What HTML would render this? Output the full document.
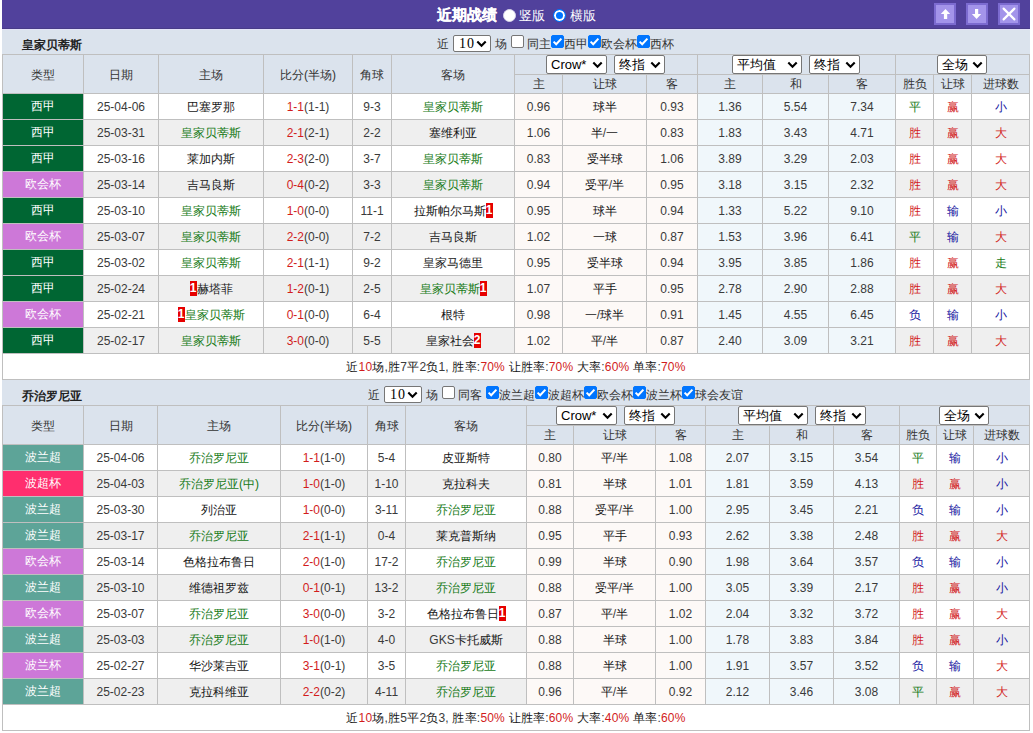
<!DOCTYPE html><html><head><meta charset="utf-8"><style>
html,body{margin:0;padding:0;background:#fff;}
body{width:1033px;height:733px;position:relative;overflow:hidden;font-family:"Liberation Sans",sans-serif;}
div{position:absolute;box-sizing:border-box;}
.t,.th,.td,.tl,.tt{white-space:nowrap;color:#333;font-size:12px;}
.th,.td,.tl{text-align:center;}
.c{}
.th{color:#333;}
.td{color:#3a3a3a;}
.td>.c{color:#161616;}
.tl{color:#fff;}
.tt{font-weight:bold;font-size:12px;color:#222;}
.ff{color:#333;}
.sel{background:#fff;border:1px solid #767676;border-radius:2px;overflow:hidden;}
.sel .sl{position:absolute;left:0;top:0;font-size:13px;color:#000;white-space:nowrap;}
.sel .chev{position:absolute;right:3px;}
.cb{width:13px;height:13px;border:1px solid #767676;border-radius:2px;background:#fff;}
.cb.on{background:#0075ff;border-color:#0075ff;}
.cb svg{position:absolute;left:-1px;top:-1px;}
.rc{display:inline-block;background:#e60000;color:#fff;font-weight:bold;font-size:12px;width:7px;height:15px;line-height:15px;text-align:center;vertical-align:middle;position:relative;top:-1.5px;overflow:hidden;}
.ib{width:22px;height:22px;background:#a394ea;border:2px solid #7c6bd0;}
</style></head><body>

<div style="left:2px;top:0px;width:1028px;height:29px;background:#51419c;"></div>
<div style="left:2px;top:28px;width:1028px;height:1px;background:#483b88;"></div>
<div class="t" style="left:437px;top:0;height:29px;line-height:29px;color:#fff;font-weight:bold;font-size:15px;-webkit-text-stroke:0.25px #fff"><span class="c">近期战绩</span></div>
<div style="left:503px;top:9px;width:13px;height:13px;border-radius:50%;background:#fff;border:1px solid #d8d4ea"></div>
<div class="t" style="left:519px;top:1px;height:29px;line-height:29px;color:#fff;font-size:13px"><span class="c">竖版</span></div>
<div style="left:553px;top:9px;width:13px;height:13px;border-radius:50%;background:#0075ff;border:1px solid #0075ff;box-shadow:inset 0 0 0 2px #fff"></div>
<div class="t" style="left:570px;top:1px;height:29px;line-height:29px;color:#fff;font-size:13px"><span class="c">横版</span></div>
<div class="ib" style="left:934px;top:3px"><svg width="18" height="18" viewBox="0 0 18 18" style="position:absolute;left:0;top:0"><path d="M9.5 4 L14.2 9.1 L11.2 9.1 L11.2 13.9 L7.9 13.9 L7.9 9.1 L4.8 9.1 Z" fill="#fff"/></svg></div>
<div class="ib" style="left:966px;top:3px"><svg width="18" height="18" viewBox="0 0 18 18" style="position:absolute;left:0;top:0"><path d="M8.6 13.9 L13.2 9.1 L10.2 9.1 L10.2 4 L7 4 L7 9.1 L3.9 9.1 Z" fill="#fff"/></svg></div>
<div class="ib" style="left:998px;top:3px"><svg width="18" height="18" viewBox="0 0 18 18" style="position:absolute;left:0;top:0"><path d="M3.6 3.6 L14.4 14.4 M14.4 3.6 L3.6 14.4" stroke="#fff" stroke-width="2.2" stroke-linecap="round" fill="none"/></svg></div>
<div style="left:2px;top:29px;width:1028px;height:25px;background:#dbe3ed;"></div>
<div class="tt" style="left:22px;top:33px;width:180px;height:25px;line-height:25px;"><span class="c">皇家贝蒂斯</span></div>
<div class="t ff" style="left:437px;top:32px;height:25px;line-height:25px"><span class="c">近</span></div>
<div class="sel" style="left:453px;top:35px;width:38px;height:17px;"><span class="sl" style="line-height:15px;padding-left:5px;font-family:Liberation Serif,serif;font-size:14px;letter-spacing:1px;top:-0.5px">10</span><svg class="chev" width="11" height="8" viewBox="0 0 11 8" style="top:4.0px"><path d="M1.3 1.5 L5.5 5.7 L9.7 1.5" fill="none" stroke="#000" stroke-width="2.1"/></svg></div>
<div class="t ff" style="left:495px;top:32px;height:25px;line-height:25px"><span class="c">场</span></div>
<div class="cb" style="left:511px;top:35px"></div>
<div class="t ff" style="left:527px;top:32px;height:25px;line-height:25px"><span class="c">同主</span></div>
<div class="cb on" style="left:551px;top:35px"><svg width="13" height="13" viewBox="0 0 13 13"><path d="M2.6 6.6 L5.2 9.2 L10.4 3.6" fill="none" stroke="#fff" stroke-width="2"/></svg></div>
<div class="t ff" style="left:564px;top:32px;height:25px;line-height:25px"><span class="c">西甲</span></div>
<div class="cb on" style="left:588px;top:35px"><svg width="13" height="13" viewBox="0 0 13 13"><path d="M2.6 6.6 L5.2 9.2 L10.4 3.6" fill="none" stroke="#fff" stroke-width="2"/></svg></div>
<div class="t ff" style="left:601px;top:32px;height:25px;line-height:25px"><span class="c">欧会杯</span></div>
<div class="cb on" style="left:637px;top:35px"><svg width="13" height="13" viewBox="0 0 13 13"><path d="M2.6 6.6 L5.2 9.2 L10.4 3.6" fill="none" stroke="#fff" stroke-width="2"/></svg></div>
<div class="t ff" style="left:650px;top:32px;height:25px;line-height:25px"><span class="c">西杯</span></div>
<div style="left:2px;top:54px;width:1028px;height:39px;background:#dbe3ed;"></div>
<div style="left:2px;top:93px;width:1028px;height:26px;background:#ffffff;"></div>
<div style="left:514px;top:93px;width:183px;height:26px;background:#fdf9f7;"></div>
<div style="left:697px;top:93px;width:198px;height:26px;background:#f0f7fb;"></div>
<div style="left:2px;top:93px;width:81px;height:26px;background:#006633;"></div>
<div style="left:2px;top:119px;width:1028px;height:26px;background:#efefef;"></div>
<div style="left:514px;top:119px;width:183px;height:26px;background:#fdf9f7;"></div>
<div style="left:697px;top:119px;width:198px;height:26px;background:#f0f7fb;"></div>
<div style="left:2px;top:119px;width:81px;height:26px;background:#006633;"></div>
<div style="left:2px;top:145px;width:1028px;height:26px;background:#ffffff;"></div>
<div style="left:514px;top:145px;width:183px;height:26px;background:#fdf9f7;"></div>
<div style="left:697px;top:145px;width:198px;height:26px;background:#f0f7fb;"></div>
<div style="left:2px;top:145px;width:81px;height:26px;background:#006633;"></div>
<div style="left:2px;top:171px;width:1028px;height:26px;background:#efefef;"></div>
<div style="left:514px;top:171px;width:183px;height:26px;background:#fdf9f7;"></div>
<div style="left:697px;top:171px;width:198px;height:26px;background:#f0f7fb;"></div>
<div style="left:2px;top:171px;width:81px;height:26px;background:#cd78d8;"></div>
<div style="left:2px;top:197px;width:1028px;height:26px;background:#ffffff;"></div>
<div style="left:514px;top:197px;width:183px;height:26px;background:#fdf9f7;"></div>
<div style="left:697px;top:197px;width:198px;height:26px;background:#f0f7fb;"></div>
<div style="left:2px;top:197px;width:81px;height:26px;background:#006633;"></div>
<div style="left:2px;top:223px;width:1028px;height:26px;background:#efefef;"></div>
<div style="left:514px;top:223px;width:183px;height:26px;background:#fdf9f7;"></div>
<div style="left:697px;top:223px;width:198px;height:26px;background:#f0f7fb;"></div>
<div style="left:2px;top:223px;width:81px;height:26px;background:#cd78d8;"></div>
<div style="left:2px;top:249px;width:1028px;height:26px;background:#ffffff;"></div>
<div style="left:514px;top:249px;width:183px;height:26px;background:#fdf9f7;"></div>
<div style="left:697px;top:249px;width:198px;height:26px;background:#f0f7fb;"></div>
<div style="left:2px;top:249px;width:81px;height:26px;background:#006633;"></div>
<div style="left:2px;top:275px;width:1028px;height:26px;background:#efefef;"></div>
<div style="left:514px;top:275px;width:183px;height:26px;background:#fdf9f7;"></div>
<div style="left:697px;top:275px;width:198px;height:26px;background:#f0f7fb;"></div>
<div style="left:2px;top:275px;width:81px;height:26px;background:#006633;"></div>
<div style="left:2px;top:301px;width:1028px;height:26px;background:#ffffff;"></div>
<div style="left:514px;top:301px;width:183px;height:26px;background:#fdf9f7;"></div>
<div style="left:697px;top:301px;width:198px;height:26px;background:#f0f7fb;"></div>
<div style="left:2px;top:301px;width:81px;height:26px;background:#cd78d8;"></div>
<div style="left:2px;top:327px;width:1028px;height:26px;background:#efefef;"></div>
<div style="left:514px;top:327px;width:183px;height:26px;background:#fdf9f7;"></div>
<div style="left:697px;top:327px;width:198px;height:26px;background:#f0f7fb;"></div>
<div style="left:2px;top:327px;width:81px;height:26px;background:#006633;"></div>
<div style="left:2px;top:353px;width:1028px;height:26px;background:#ffffff;"></div>
<div style="left:2px;top:54px;width:1028px;height:1px;background:#bfbfbf;"></div>
<div style="left:514px;top:74px;width:516px;height:1px;background:#bfbfbf;"></div>
<div style="left:2px;top:93px;width:1028px;height:1px;background:#bfbfbf;"></div>
<div style="left:2px;top:93px;width:1028px;height:1px;background:#bfbfbf;"></div>
<div style="left:2px;top:119px;width:1028px;height:1px;background:#bfbfbf;"></div>
<div style="left:2px;top:145px;width:1028px;height:1px;background:#bfbfbf;"></div>
<div style="left:2px;top:171px;width:1028px;height:1px;background:#bfbfbf;"></div>
<div style="left:2px;top:197px;width:1028px;height:1px;background:#bfbfbf;"></div>
<div style="left:2px;top:223px;width:1028px;height:1px;background:#bfbfbf;"></div>
<div style="left:2px;top:249px;width:1028px;height:1px;background:#bfbfbf;"></div>
<div style="left:2px;top:275px;width:1028px;height:1px;background:#bfbfbf;"></div>
<div style="left:2px;top:301px;width:1028px;height:1px;background:#bfbfbf;"></div>
<div style="left:2px;top:327px;width:1028px;height:1px;background:#bfbfbf;"></div>
<div style="left:2px;top:353px;width:1028px;height:1px;background:#bfbfbf;"></div>
<div style="left:2px;top:379px;width:1028px;height:1px;background:#bfbfbf;"></div>
<div style="left:2px;top:54px;width:1px;height:326px;background:#bfbfbf;"></div>
<div style="left:83px;top:54px;width:1px;height:300px;background:#bfbfbf;"></div>
<div style="left:158px;top:54px;width:1px;height:300px;background:#bfbfbf;"></div>
<div style="left:263px;top:54px;width:1px;height:300px;background:#bfbfbf;"></div>
<div style="left:352px;top:54px;width:1px;height:300px;background:#bfbfbf;"></div>
<div style="left:391px;top:54px;width:1px;height:300px;background:#bfbfbf;"></div>
<div style="left:514px;top:54px;width:1px;height:300px;background:#bfbfbf;"></div>
<div style="left:562px;top:74px;width:1px;height:280px;background:#bfbfbf;"></div>
<div style="left:646px;top:74px;width:1px;height:280px;background:#bfbfbf;"></div>
<div style="left:697px;top:54px;width:1px;height:300px;background:#bfbfbf;"></div>
<div style="left:762px;top:74px;width:1px;height:280px;background:#bfbfbf;"></div>
<div style="left:828px;top:74px;width:1px;height:280px;background:#bfbfbf;"></div>
<div style="left:895px;top:54px;width:1px;height:300px;background:#bfbfbf;"></div>
<div style="left:933px;top:74px;width:1px;height:280px;background:#bfbfbf;"></div>
<div style="left:971px;top:74px;width:1px;height:280px;background:#bfbfbf;"></div>
<div style="left:1029px;top:54px;width:1px;height:326px;background:#bfbfbf;"></div>
<div class="th" style="left:3px;top:56px;width:80px;height:38px;line-height:38px;"><span class="c">类型</span></div>
<div class="th" style="left:84px;top:56px;width:74px;height:38px;line-height:38px;"><span class="c">日期</span></div>
<div class="th" style="left:159px;top:56px;width:104px;height:38px;line-height:38px;"><span class="c">主场</span></div>
<div class="th" style="left:264px;top:56px;width:88px;height:38px;line-height:38px;"><span class="c">比分</span>(<span class="c">半场</span>)</div>
<div class="th" style="left:353px;top:56px;width:38px;height:38px;line-height:38px;"><span class="c">角球</span></div>
<div class="th" style="left:392px;top:56px;width:122px;height:38px;line-height:38px;"><span class="c">客场</span></div>
<div class="th sub" style="left:515px;top:75px;width:47px;height:18px;line-height:18px;"><span class="c">主</span></div>
<div class="th sub" style="left:563px;top:75px;width:83px;height:18px;line-height:18px;"><span class="c">让球</span></div>
<div class="th sub" style="left:647px;top:75px;width:50px;height:18px;line-height:18px;"><span class="c">客</span></div>
<div class="th sub" style="left:698px;top:75px;width:64px;height:18px;line-height:18px;"><span class="c">主</span></div>
<div class="th sub" style="left:763px;top:75px;width:65px;height:18px;line-height:18px;"><span class="c">和</span></div>
<div class="th sub" style="left:829px;top:75px;width:66px;height:18px;line-height:18px;"><span class="c">客</span></div>
<div class="th sub" style="left:896px;top:75px;width:37px;height:18px;line-height:18px;"><span class="c">胜负</span></div>
<div class="th sub" style="left:934px;top:75px;width:37px;height:18px;line-height:18px;"><span class="c">让球</span></div>
<div class="th sub" style="left:972px;top:75px;width:57px;height:18px;line-height:18px;"><span class="c">进球数</span></div>
<div class="sel" style="left:546px;top:55px;width:61px;height:19px;"><span class="sl" style="line-height:17px;padding-left:4px">Crow*</span><svg class="chev" width="11" height="8" viewBox="0 0 11 8" style="top:5.0px"><path d="M1.3 1.5 L5.5 5.7 L9.7 1.5" fill="none" stroke="#000" stroke-width="2.1"/></svg></div>
<div class="sel" style="left:614px;top:55px;width:51px;height:19px;"><span class="sl" style="line-height:17px;padding-left:4px"><span class="c">终指</span></span><svg class="chev" width="11" height="8" viewBox="0 0 11 8" style="top:5.0px"><path d="M1.3 1.5 L5.5 5.7 L9.7 1.5" fill="none" stroke="#000" stroke-width="2.1"/></svg></div>
<div class="sel" style="left:732px;top:55px;width:70px;height:19px;"><span class="sl" style="line-height:17px;padding-left:4px"><span class="c">平均值</span></span><svg class="chev" width="11" height="8" viewBox="0 0 11 8" style="top:5.0px"><path d="M1.3 1.5 L5.5 5.7 L9.7 1.5" fill="none" stroke="#000" stroke-width="2.1"/></svg></div>
<div class="sel" style="left:809px;top:55px;width:51px;height:19px;"><span class="sl" style="line-height:17px;padding-left:4px"><span class="c">终指</span></span><svg class="chev" width="11" height="8" viewBox="0 0 11 8" style="top:5.0px"><path d="M1.3 1.5 L5.5 5.7 L9.7 1.5" fill="none" stroke="#000" stroke-width="2.1"/></svg></div>
<div class="sel" style="left:937px;top:55px;width:50px;height:19px;"><span class="sl" style="line-height:17px;padding-left:4px"><span class="c">全场</span></span><svg class="chev" width="11" height="8" viewBox="0 0 11 8" style="top:5.0px"><path d="M1.3 1.5 L5.5 5.7 L9.7 1.5" fill="none" stroke="#000" stroke-width="2.1"/></svg></div>
<div class="tl" style="left:3px;top:94px;width:80px;height:25px;line-height:25px;"><span class="c">西甲</span></div>
<div class="td" style="left:84px;top:95px;width:74px;height:25px;line-height:25px;">25-04-06</div>
<div class="td" style="left:159px;top:95px;width:104px;height:25px;line-height:25px;"><span class="c">巴塞罗那</span></div>
<div class="td" style="left:264px;top:95px;width:88px;height:25px;line-height:25px;"><span style="color:#d21c1c">1-1</span>(1-1)</div>
<div class="td" style="left:353px;top:95px;width:38px;height:25px;line-height:25px;">9-3</div>
<div class="td" style="left:392px;top:95px;width:122px;height:25px;line-height:25px;"><span style="color:#167a16"><span class="c">皇家贝蒂斯</span></span></div>
<div class="td" style="left:515px;top:95px;width:47px;height:25px;line-height:25px;">0.96</div>
<div class="td" style="left:563px;top:95px;width:83px;height:25px;line-height:25px;"><span class="c">球半</span></div>
<div class="td" style="left:647px;top:95px;width:50px;height:25px;line-height:25px;">0.93</div>
<div class="td" style="left:698px;top:95px;width:64px;height:25px;line-height:25px;">1.36</div>
<div class="td" style="left:763px;top:95px;width:65px;height:25px;line-height:25px;">5.54</div>
<div class="td" style="left:829px;top:95px;width:66px;height:25px;line-height:25px;">7.34</div>
<div class="td" style="left:896px;top:95px;width:37px;height:25px;line-height:25px;"><span style="color:#167a16"><span class="c">平</span></span></div>
<div class="td" style="left:934px;top:95px;width:37px;height:25px;line-height:25px;"><span style="color:#d21c1c"><span class="c">赢</span></span></div>
<div class="td" style="left:972px;top:95px;width:57px;height:25px;line-height:25px;"><span style="color:#1414a0"><span class="c">小</span></span></div>
<div class="tl" style="left:3px;top:120px;width:80px;height:25px;line-height:25px;"><span class="c">西甲</span></div>
<div class="td" style="left:84px;top:121px;width:74px;height:25px;line-height:25px;">25-03-31</div>
<div class="td" style="left:159px;top:121px;width:104px;height:25px;line-height:25px;"><span style="color:#167a16"><span class="c">皇家贝蒂斯</span></span></div>
<div class="td" style="left:264px;top:121px;width:88px;height:25px;line-height:25px;"><span style="color:#d21c1c">2-1</span>(2-1)</div>
<div class="td" style="left:353px;top:121px;width:38px;height:25px;line-height:25px;">2-2</div>
<div class="td" style="left:392px;top:121px;width:122px;height:25px;line-height:25px;"><span class="c">塞维利亚</span></div>
<div class="td" style="left:515px;top:121px;width:47px;height:25px;line-height:25px;">1.06</div>
<div class="td" style="left:563px;top:121px;width:83px;height:25px;line-height:25px;"><span class="c">半</span>/<span class="c">一</span></div>
<div class="td" style="left:647px;top:121px;width:50px;height:25px;line-height:25px;">0.83</div>
<div class="td" style="left:698px;top:121px;width:64px;height:25px;line-height:25px;">1.83</div>
<div class="td" style="left:763px;top:121px;width:65px;height:25px;line-height:25px;">3.43</div>
<div class="td" style="left:829px;top:121px;width:66px;height:25px;line-height:25px;">4.71</div>
<div class="td" style="left:896px;top:121px;width:37px;height:25px;line-height:25px;"><span style="color:#d21c1c"><span class="c">胜</span></span></div>
<div class="td" style="left:934px;top:121px;width:37px;height:25px;line-height:25px;"><span style="color:#d21c1c"><span class="c">赢</span></span></div>
<div class="td" style="left:972px;top:121px;width:57px;height:25px;line-height:25px;"><span style="color:#d21c1c"><span class="c">大</span></span></div>
<div class="tl" style="left:3px;top:146px;width:80px;height:25px;line-height:25px;"><span class="c">西甲</span></div>
<div class="td" style="left:84px;top:147px;width:74px;height:25px;line-height:25px;">25-03-16</div>
<div class="td" style="left:159px;top:147px;width:104px;height:25px;line-height:25px;"><span class="c">莱加内斯</span></div>
<div class="td" style="left:264px;top:147px;width:88px;height:25px;line-height:25px;"><span style="color:#d21c1c">2-3</span>(2-0)</div>
<div class="td" style="left:353px;top:147px;width:38px;height:25px;line-height:25px;">3-7</div>
<div class="td" style="left:392px;top:147px;width:122px;height:25px;line-height:25px;"><span style="color:#167a16"><span class="c">皇家贝蒂斯</span></span></div>
<div class="td" style="left:515px;top:147px;width:47px;height:25px;line-height:25px;">0.83</div>
<div class="td" style="left:563px;top:147px;width:83px;height:25px;line-height:25px;"><span class="c">受半球</span></div>
<div class="td" style="left:647px;top:147px;width:50px;height:25px;line-height:25px;">1.06</div>
<div class="td" style="left:698px;top:147px;width:64px;height:25px;line-height:25px;">3.89</div>
<div class="td" style="left:763px;top:147px;width:65px;height:25px;line-height:25px;">3.29</div>
<div class="td" style="left:829px;top:147px;width:66px;height:25px;line-height:25px;">2.03</div>
<div class="td" style="left:896px;top:147px;width:37px;height:25px;line-height:25px;"><span style="color:#d21c1c"><span class="c">胜</span></span></div>
<div class="td" style="left:934px;top:147px;width:37px;height:25px;line-height:25px;"><span style="color:#d21c1c"><span class="c">赢</span></span></div>
<div class="td" style="left:972px;top:147px;width:57px;height:25px;line-height:25px;"><span style="color:#d21c1c"><span class="c">大</span></span></div>
<div class="tl" style="left:3px;top:172px;width:80px;height:25px;line-height:25px;"><span class="c">欧会杯</span></div>
<div class="td" style="left:84px;top:173px;width:74px;height:25px;line-height:25px;">25-03-14</div>
<div class="td" style="left:159px;top:173px;width:104px;height:25px;line-height:25px;"><span class="c">吉马良斯</span></div>
<div class="td" style="left:264px;top:173px;width:88px;height:25px;line-height:25px;"><span style="color:#d21c1c">0-4</span>(0-2)</div>
<div class="td" style="left:353px;top:173px;width:38px;height:25px;line-height:25px;">3-3</div>
<div class="td" style="left:392px;top:173px;width:122px;height:25px;line-height:25px;"><span style="color:#167a16"><span class="c">皇家贝蒂斯</span></span></div>
<div class="td" style="left:515px;top:173px;width:47px;height:25px;line-height:25px;">0.94</div>
<div class="td" style="left:563px;top:173px;width:83px;height:25px;line-height:25px;"><span class="c">受平</span>/<span class="c">半</span></div>
<div class="td" style="left:647px;top:173px;width:50px;height:25px;line-height:25px;">0.95</div>
<div class="td" style="left:698px;top:173px;width:64px;height:25px;line-height:25px;">3.18</div>
<div class="td" style="left:763px;top:173px;width:65px;height:25px;line-height:25px;">3.15</div>
<div class="td" style="left:829px;top:173px;width:66px;height:25px;line-height:25px;">2.32</div>
<div class="td" style="left:896px;top:173px;width:37px;height:25px;line-height:25px;"><span style="color:#d21c1c"><span class="c">胜</span></span></div>
<div class="td" style="left:934px;top:173px;width:37px;height:25px;line-height:25px;"><span style="color:#d21c1c"><span class="c">赢</span></span></div>
<div class="td" style="left:972px;top:173px;width:57px;height:25px;line-height:25px;"><span style="color:#d21c1c"><span class="c">大</span></span></div>
<div class="tl" style="left:3px;top:198px;width:80px;height:25px;line-height:25px;"><span class="c">西甲</span></div>
<div class="td" style="left:84px;top:199px;width:74px;height:25px;line-height:25px;">25-03-10</div>
<div class="td" style="left:159px;top:199px;width:104px;height:25px;line-height:25px;"><span style="color:#167a16"><span class="c">皇家贝蒂斯</span></span></div>
<div class="td" style="left:264px;top:199px;width:88px;height:25px;line-height:25px;"><span style="color:#d21c1c">1-0</span>(0-0)</div>
<div class="td" style="left:353px;top:199px;width:38px;height:25px;line-height:25px;">11-1</div>
<div class="td" style="left:392px;top:199px;width:122px;height:25px;line-height:25px;"><span class="c">拉斯帕尔马斯</span><span class="rc">1</span></div>
<div class="td" style="left:515px;top:199px;width:47px;height:25px;line-height:25px;">0.95</div>
<div class="td" style="left:563px;top:199px;width:83px;height:25px;line-height:25px;"><span class="c">球半</span></div>
<div class="td" style="left:647px;top:199px;width:50px;height:25px;line-height:25px;">0.94</div>
<div class="td" style="left:698px;top:199px;width:64px;height:25px;line-height:25px;">1.33</div>
<div class="td" style="left:763px;top:199px;width:65px;height:25px;line-height:25px;">5.22</div>
<div class="td" style="left:829px;top:199px;width:66px;height:25px;line-height:25px;">9.10</div>
<div class="td" style="left:896px;top:199px;width:37px;height:25px;line-height:25px;"><span style="color:#d21c1c"><span class="c">胜</span></span></div>
<div class="td" style="left:934px;top:199px;width:37px;height:25px;line-height:25px;"><span style="color:#1414a0"><span class="c">输</span></span></div>
<div class="td" style="left:972px;top:199px;width:57px;height:25px;line-height:25px;"><span style="color:#1414a0"><span class="c">小</span></span></div>
<div class="tl" style="left:3px;top:224px;width:80px;height:25px;line-height:25px;"><span class="c">欧会杯</span></div>
<div class="td" style="left:84px;top:225px;width:74px;height:25px;line-height:25px;">25-03-07</div>
<div class="td" style="left:159px;top:225px;width:104px;height:25px;line-height:25px;"><span style="color:#167a16"><span class="c">皇家贝蒂斯</span></span></div>
<div class="td" style="left:264px;top:225px;width:88px;height:25px;line-height:25px;"><span style="color:#d21c1c">2-2</span>(0-0)</div>
<div class="td" style="left:353px;top:225px;width:38px;height:25px;line-height:25px;">7-2</div>
<div class="td" style="left:392px;top:225px;width:122px;height:25px;line-height:25px;"><span class="c">吉马良斯</span></div>
<div class="td" style="left:515px;top:225px;width:47px;height:25px;line-height:25px;">1.02</div>
<div class="td" style="left:563px;top:225px;width:83px;height:25px;line-height:25px;"><span class="c">一球</span></div>
<div class="td" style="left:647px;top:225px;width:50px;height:25px;line-height:25px;">0.87</div>
<div class="td" style="left:698px;top:225px;width:64px;height:25px;line-height:25px;">1.53</div>
<div class="td" style="left:763px;top:225px;width:65px;height:25px;line-height:25px;">3.96</div>
<div class="td" style="left:829px;top:225px;width:66px;height:25px;line-height:25px;">6.41</div>
<div class="td" style="left:896px;top:225px;width:37px;height:25px;line-height:25px;"><span style="color:#167a16"><span class="c">平</span></span></div>
<div class="td" style="left:934px;top:225px;width:37px;height:25px;line-height:25px;"><span style="color:#1414a0"><span class="c">输</span></span></div>
<div class="td" style="left:972px;top:225px;width:57px;height:25px;line-height:25px;"><span style="color:#d21c1c"><span class="c">大</span></span></div>
<div class="tl" style="left:3px;top:250px;width:80px;height:25px;line-height:25px;"><span class="c">西甲</span></div>
<div class="td" style="left:84px;top:251px;width:74px;height:25px;line-height:25px;">25-03-02</div>
<div class="td" style="left:159px;top:251px;width:104px;height:25px;line-height:25px;"><span style="color:#167a16"><span class="c">皇家贝蒂斯</span></span></div>
<div class="td" style="left:264px;top:251px;width:88px;height:25px;line-height:25px;"><span style="color:#d21c1c">2-1</span>(1-1)</div>
<div class="td" style="left:353px;top:251px;width:38px;height:25px;line-height:25px;">9-2</div>
<div class="td" style="left:392px;top:251px;width:122px;height:25px;line-height:25px;"><span class="c">皇家马德里</span></div>
<div class="td" style="left:515px;top:251px;width:47px;height:25px;line-height:25px;">0.95</div>
<div class="td" style="left:563px;top:251px;width:83px;height:25px;line-height:25px;"><span class="c">受半球</span></div>
<div class="td" style="left:647px;top:251px;width:50px;height:25px;line-height:25px;">0.94</div>
<div class="td" style="left:698px;top:251px;width:64px;height:25px;line-height:25px;">3.95</div>
<div class="td" style="left:763px;top:251px;width:65px;height:25px;line-height:25px;">3.85</div>
<div class="td" style="left:829px;top:251px;width:66px;height:25px;line-height:25px;">1.86</div>
<div class="td" style="left:896px;top:251px;width:37px;height:25px;line-height:25px;"><span style="color:#d21c1c"><span class="c">胜</span></span></div>
<div class="td" style="left:934px;top:251px;width:37px;height:25px;line-height:25px;"><span style="color:#d21c1c"><span class="c">赢</span></span></div>
<div class="td" style="left:972px;top:251px;width:57px;height:25px;line-height:25px;"><span style="color:#167a16"><span class="c">走</span></span></div>
<div class="tl" style="left:3px;top:276px;width:80px;height:25px;line-height:25px;"><span class="c">西甲</span></div>
<div class="td" style="left:84px;top:277px;width:74px;height:25px;line-height:25px;">25-02-24</div>
<div class="td" style="left:159px;top:277px;width:104px;height:25px;line-height:25px;"><span class="rc">1</span><span class="c">赫塔菲</span></div>
<div class="td" style="left:264px;top:277px;width:88px;height:25px;line-height:25px;"><span style="color:#d21c1c">1-2</span>(0-1)</div>
<div class="td" style="left:353px;top:277px;width:38px;height:25px;line-height:25px;">2-5</div>
<div class="td" style="left:392px;top:277px;width:122px;height:25px;line-height:25px;"><span style="color:#167a16"><span class="c">皇家贝蒂斯</span></span><span class="rc">1</span></div>
<div class="td" style="left:515px;top:277px;width:47px;height:25px;line-height:25px;">1.07</div>
<div class="td" style="left:563px;top:277px;width:83px;height:25px;line-height:25px;"><span class="c">平手</span></div>
<div class="td" style="left:647px;top:277px;width:50px;height:25px;line-height:25px;">0.95</div>
<div class="td" style="left:698px;top:277px;width:64px;height:25px;line-height:25px;">2.78</div>
<div class="td" style="left:763px;top:277px;width:65px;height:25px;line-height:25px;">2.90</div>
<div class="td" style="left:829px;top:277px;width:66px;height:25px;line-height:25px;">2.88</div>
<div class="td" style="left:896px;top:277px;width:37px;height:25px;line-height:25px;"><span style="color:#d21c1c"><span class="c">胜</span></span></div>
<div class="td" style="left:934px;top:277px;width:37px;height:25px;line-height:25px;"><span style="color:#d21c1c"><span class="c">赢</span></span></div>
<div class="td" style="left:972px;top:277px;width:57px;height:25px;line-height:25px;"><span style="color:#d21c1c"><span class="c">大</span></span></div>
<div class="tl" style="left:3px;top:302px;width:80px;height:25px;line-height:25px;"><span class="c">欧会杯</span></div>
<div class="td" style="left:84px;top:303px;width:74px;height:25px;line-height:25px;">25-02-21</div>
<div class="td" style="left:159px;top:303px;width:104px;height:25px;line-height:25px;"><span class="rc">1</span><span style="color:#167a16"><span class="c">皇家贝蒂斯</span></span></div>
<div class="td" style="left:264px;top:303px;width:88px;height:25px;line-height:25px;"><span style="color:#d21c1c">0-1</span>(0-0)</div>
<div class="td" style="left:353px;top:303px;width:38px;height:25px;line-height:25px;">6-4</div>
<div class="td" style="left:392px;top:303px;width:122px;height:25px;line-height:25px;"><span class="c">根特</span></div>
<div class="td" style="left:515px;top:303px;width:47px;height:25px;line-height:25px;">0.98</div>
<div class="td" style="left:563px;top:303px;width:83px;height:25px;line-height:25px;"><span class="c">一</span>/<span class="c">球半</span></div>
<div class="td" style="left:647px;top:303px;width:50px;height:25px;line-height:25px;">0.91</div>
<div class="td" style="left:698px;top:303px;width:64px;height:25px;line-height:25px;">1.45</div>
<div class="td" style="left:763px;top:303px;width:65px;height:25px;line-height:25px;">4.55</div>
<div class="td" style="left:829px;top:303px;width:66px;height:25px;line-height:25px;">6.45</div>
<div class="td" style="left:896px;top:303px;width:37px;height:25px;line-height:25px;"><span style="color:#1414a0"><span class="c">负</span></span></div>
<div class="td" style="left:934px;top:303px;width:37px;height:25px;line-height:25px;"><span style="color:#1414a0"><span class="c">输</span></span></div>
<div class="td" style="left:972px;top:303px;width:57px;height:25px;line-height:25px;"><span style="color:#1414a0"><span class="c">小</span></span></div>
<div class="tl" style="left:3px;top:328px;width:80px;height:25px;line-height:25px;"><span class="c">西甲</span></div>
<div class="td" style="left:84px;top:329px;width:74px;height:25px;line-height:25px;">25-02-17</div>
<div class="td" style="left:159px;top:329px;width:104px;height:25px;line-height:25px;"><span style="color:#167a16"><span class="c">皇家贝蒂斯</span></span></div>
<div class="td" style="left:264px;top:329px;width:88px;height:25px;line-height:25px;"><span style="color:#d21c1c">3-0</span>(0-0)</div>
<div class="td" style="left:353px;top:329px;width:38px;height:25px;line-height:25px;">5-5</div>
<div class="td" style="left:392px;top:329px;width:122px;height:25px;line-height:25px;"><span class="c">皇家社会</span><span class="rc">2</span></div>
<div class="td" style="left:515px;top:329px;width:47px;height:25px;line-height:25px;">1.02</div>
<div class="td" style="left:563px;top:329px;width:83px;height:25px;line-height:25px;"><span class="c">平</span>/<span class="c">半</span></div>
<div class="td" style="left:647px;top:329px;width:50px;height:25px;line-height:25px;">0.87</div>
<div class="td" style="left:698px;top:329px;width:64px;height:25px;line-height:25px;">2.40</div>
<div class="td" style="left:763px;top:329px;width:65px;height:25px;line-height:25px;">3.09</div>
<div class="td" style="left:829px;top:329px;width:66px;height:25px;line-height:25px;">3.21</div>
<div class="td" style="left:896px;top:329px;width:37px;height:25px;line-height:25px;"><span style="color:#d21c1c"><span class="c">胜</span></span></div>
<div class="td" style="left:934px;top:329px;width:37px;height:25px;line-height:25px;"><span style="color:#d21c1c"><span class="c">赢</span></span></div>
<div class="td" style="left:972px;top:329px;width:57px;height:25px;line-height:25px;"><span style="color:#d21c1c"><span class="c">大</span></span></div>
<div class="td" style="left:3px;top:355px;width:1026px;height:25px;line-height:25px;letter-spacing:0.2px"><span class="c">近</span><span style="color:#d21c1c">10</span><span class="c">场</span>,<span class="c">胜</span>7<span class="c">平</span>2<span class="c">负</span>1, <span class="c">胜率</span>:<span style="color:#d21c1c">70%</span> <span class="c">让胜率</span>:<span style="color:#d21c1c">70%</span> <span class="c">大率</span>:<span style="color:#d21c1c">60%</span> <span class="c">单率</span>:<span style="color:#d21c1c">70%</span></div>
<div style="left:2px;top:380px;width:1028px;height:25px;background:#dbe3ed;"></div>
<div class="tt" style="left:22px;top:384px;width:180px;height:25px;line-height:25px;"><span class="c">乔治罗尼亚</span></div>
<div class="t ff" style="left:368px;top:383px;height:25px;line-height:25px"><span class="c">近</span></div>
<div class="sel" style="left:384px;top:386px;width:38px;height:17px;"><span class="sl" style="line-height:15px;padding-left:5px;font-family:Liberation Serif,serif;font-size:14px;letter-spacing:1px;top:-0.5px">10</span><svg class="chev" width="11" height="8" viewBox="0 0 11 8" style="top:4.0px"><path d="M1.3 1.5 L5.5 5.7 L9.7 1.5" fill="none" stroke="#000" stroke-width="2.1"/></svg></div>
<div class="t ff" style="left:426px;top:383px;height:25px;line-height:25px"><span class="c">场</span></div>
<div class="cb" style="left:442px;top:386px"></div>
<div class="t ff" style="left:458px;top:383px;height:25px;line-height:25px"><span class="c">同客</span></div>
<div class="cb on" style="left:486px;top:386px"><svg width="13" height="13" viewBox="0 0 13 13"><path d="M2.6 6.6 L5.2 9.2 L10.4 3.6" fill="none" stroke="#fff" stroke-width="2"/></svg></div>
<div class="t ff" style="left:499px;top:383px;height:25px;line-height:25px"><span class="c">波兰超</span></div>
<div class="cb on" style="left:535px;top:386px"><svg width="13" height="13" viewBox="0 0 13 13"><path d="M2.6 6.6 L5.2 9.2 L10.4 3.6" fill="none" stroke="#fff" stroke-width="2"/></svg></div>
<div class="t ff" style="left:548px;top:383px;height:25px;line-height:25px"><span class="c">波超杯</span></div>
<div class="cb on" style="left:584px;top:386px"><svg width="13" height="13" viewBox="0 0 13 13"><path d="M2.6 6.6 L5.2 9.2 L10.4 3.6" fill="none" stroke="#fff" stroke-width="2"/></svg></div>
<div class="t ff" style="left:597px;top:383px;height:25px;line-height:25px"><span class="c">欧会杯</span></div>
<div class="cb on" style="left:633px;top:386px"><svg width="13" height="13" viewBox="0 0 13 13"><path d="M2.6 6.6 L5.2 9.2 L10.4 3.6" fill="none" stroke="#fff" stroke-width="2"/></svg></div>
<div class="t ff" style="left:646px;top:383px;height:25px;line-height:25px"><span class="c">波兰杯</span></div>
<div class="cb on" style="left:682px;top:386px"><svg width="13" height="13" viewBox="0 0 13 13"><path d="M2.6 6.6 L5.2 9.2 L10.4 3.6" fill="none" stroke="#fff" stroke-width="2"/></svg></div>
<div class="t ff" style="left:695px;top:383px;height:25px;line-height:25px"><span class="c">球会友谊</span></div>
<div style="left:2px;top:405px;width:1028px;height:39px;background:#dbe3ed;"></div>
<div style="left:2px;top:444px;width:1028px;height:26px;background:#ffffff;"></div>
<div style="left:526px;top:444px;width:179px;height:26px;background:#fdf9f7;"></div>
<div style="left:705px;top:444px;width:194px;height:26px;background:#f0f7fb;"></div>
<div style="left:2px;top:444px;width:81px;height:26px;background:#5da498;"></div>
<div style="left:2px;top:470px;width:1028px;height:26px;background:#efefef;"></div>
<div style="left:526px;top:470px;width:179px;height:26px;background:#fdf9f7;"></div>
<div style="left:705px;top:470px;width:194px;height:26px;background:#f0f7fb;"></div>
<div style="left:2px;top:470px;width:81px;height:26px;background:#ff2e6e;"></div>
<div style="left:2px;top:496px;width:1028px;height:26px;background:#ffffff;"></div>
<div style="left:526px;top:496px;width:179px;height:26px;background:#fdf9f7;"></div>
<div style="left:705px;top:496px;width:194px;height:26px;background:#f0f7fb;"></div>
<div style="left:2px;top:496px;width:81px;height:26px;background:#5da498;"></div>
<div style="left:2px;top:522px;width:1028px;height:26px;background:#efefef;"></div>
<div style="left:526px;top:522px;width:179px;height:26px;background:#fdf9f7;"></div>
<div style="left:705px;top:522px;width:194px;height:26px;background:#f0f7fb;"></div>
<div style="left:2px;top:522px;width:81px;height:26px;background:#5da498;"></div>
<div style="left:2px;top:548px;width:1028px;height:26px;background:#ffffff;"></div>
<div style="left:526px;top:548px;width:179px;height:26px;background:#fdf9f7;"></div>
<div style="left:705px;top:548px;width:194px;height:26px;background:#f0f7fb;"></div>
<div style="left:2px;top:548px;width:81px;height:26px;background:#cd78d8;"></div>
<div style="left:2px;top:574px;width:1028px;height:26px;background:#efefef;"></div>
<div style="left:526px;top:574px;width:179px;height:26px;background:#fdf9f7;"></div>
<div style="left:705px;top:574px;width:194px;height:26px;background:#f0f7fb;"></div>
<div style="left:2px;top:574px;width:81px;height:26px;background:#5da498;"></div>
<div style="left:2px;top:600px;width:1028px;height:26px;background:#ffffff;"></div>
<div style="left:526px;top:600px;width:179px;height:26px;background:#fdf9f7;"></div>
<div style="left:705px;top:600px;width:194px;height:26px;background:#f0f7fb;"></div>
<div style="left:2px;top:600px;width:81px;height:26px;background:#cd78d8;"></div>
<div style="left:2px;top:626px;width:1028px;height:26px;background:#efefef;"></div>
<div style="left:526px;top:626px;width:179px;height:26px;background:#fdf9f7;"></div>
<div style="left:705px;top:626px;width:194px;height:26px;background:#f0f7fb;"></div>
<div style="left:2px;top:626px;width:81px;height:26px;background:#5da498;"></div>
<div style="left:2px;top:652px;width:1028px;height:26px;background:#ffffff;"></div>
<div style="left:526px;top:652px;width:179px;height:26px;background:#fdf9f7;"></div>
<div style="left:705px;top:652px;width:194px;height:26px;background:#f0f7fb;"></div>
<div style="left:2px;top:652px;width:81px;height:26px;background:#cd78d8;"></div>
<div style="left:2px;top:678px;width:1028px;height:26px;background:#efefef;"></div>
<div style="left:526px;top:678px;width:179px;height:26px;background:#fdf9f7;"></div>
<div style="left:705px;top:678px;width:194px;height:26px;background:#f0f7fb;"></div>
<div style="left:2px;top:678px;width:81px;height:26px;background:#5da498;"></div>
<div style="left:2px;top:704px;width:1028px;height:26px;background:#ffffff;"></div>
<div style="left:2px;top:405px;width:1028px;height:1px;background:#bfbfbf;"></div>
<div style="left:526px;top:425px;width:504px;height:1px;background:#bfbfbf;"></div>
<div style="left:2px;top:444px;width:1028px;height:1px;background:#bfbfbf;"></div>
<div style="left:2px;top:444px;width:1028px;height:1px;background:#bfbfbf;"></div>
<div style="left:2px;top:470px;width:1028px;height:1px;background:#bfbfbf;"></div>
<div style="left:2px;top:496px;width:1028px;height:1px;background:#bfbfbf;"></div>
<div style="left:2px;top:522px;width:1028px;height:1px;background:#bfbfbf;"></div>
<div style="left:2px;top:548px;width:1028px;height:1px;background:#bfbfbf;"></div>
<div style="left:2px;top:574px;width:1028px;height:1px;background:#bfbfbf;"></div>
<div style="left:2px;top:600px;width:1028px;height:1px;background:#bfbfbf;"></div>
<div style="left:2px;top:626px;width:1028px;height:1px;background:#bfbfbf;"></div>
<div style="left:2px;top:652px;width:1028px;height:1px;background:#bfbfbf;"></div>
<div style="left:2px;top:678px;width:1028px;height:1px;background:#bfbfbf;"></div>
<div style="left:2px;top:704px;width:1028px;height:1px;background:#bfbfbf;"></div>
<div style="left:2px;top:730px;width:1028px;height:1px;background:#bfbfbf;"></div>
<div style="left:2px;top:405px;width:1px;height:326px;background:#bfbfbf;"></div>
<div style="left:83px;top:405px;width:1px;height:300px;background:#bfbfbf;"></div>
<div style="left:157px;top:405px;width:1px;height:300px;background:#bfbfbf;"></div>
<div style="left:280px;top:405px;width:1px;height:300px;background:#bfbfbf;"></div>
<div style="left:367px;top:405px;width:1px;height:300px;background:#bfbfbf;"></div>
<div style="left:405px;top:405px;width:1px;height:300px;background:#bfbfbf;"></div>
<div style="left:526px;top:405px;width:1px;height:300px;background:#bfbfbf;"></div>
<div style="left:573px;top:425px;width:1px;height:280px;background:#bfbfbf;"></div>
<div style="left:655px;top:425px;width:1px;height:280px;background:#bfbfbf;"></div>
<div style="left:705px;top:405px;width:1px;height:300px;background:#bfbfbf;"></div>
<div style="left:769px;top:425px;width:1px;height:280px;background:#bfbfbf;"></div>
<div style="left:833px;top:425px;width:1px;height:280px;background:#bfbfbf;"></div>
<div style="left:899px;top:405px;width:1px;height:300px;background:#bfbfbf;"></div>
<div style="left:936px;top:425px;width:1px;height:280px;background:#bfbfbf;"></div>
<div style="left:973px;top:425px;width:1px;height:280px;background:#bfbfbf;"></div>
<div style="left:1029px;top:405px;width:1px;height:326px;background:#bfbfbf;"></div>
<div class="th" style="left:3px;top:407px;width:80px;height:38px;line-height:38px;"><span class="c">类型</span></div>
<div class="th" style="left:84px;top:407px;width:73px;height:38px;line-height:38px;"><span class="c">日期</span></div>
<div class="th" style="left:158px;top:407px;width:122px;height:38px;line-height:38px;"><span class="c">主场</span></div>
<div class="th" style="left:281px;top:407px;width:86px;height:38px;line-height:38px;"><span class="c">比分</span>(<span class="c">半场</span>)</div>
<div class="th" style="left:368px;top:407px;width:37px;height:38px;line-height:38px;"><span class="c">角球</span></div>
<div class="th" style="left:406px;top:407px;width:120px;height:38px;line-height:38px;"><span class="c">客场</span></div>
<div class="th sub" style="left:527px;top:426px;width:46px;height:18px;line-height:18px;"><span class="c">主</span></div>
<div class="th sub" style="left:574px;top:426px;width:81px;height:18px;line-height:18px;"><span class="c">让球</span></div>
<div class="th sub" style="left:656px;top:426px;width:49px;height:18px;line-height:18px;"><span class="c">客</span></div>
<div class="th sub" style="left:706px;top:426px;width:63px;height:18px;line-height:18px;"><span class="c">主</span></div>
<div class="th sub" style="left:770px;top:426px;width:63px;height:18px;line-height:18px;"><span class="c">和</span></div>
<div class="th sub" style="left:834px;top:426px;width:65px;height:18px;line-height:18px;"><span class="c">客</span></div>
<div class="th sub" style="left:900px;top:426px;width:36px;height:18px;line-height:18px;"><span class="c">胜负</span></div>
<div class="th sub" style="left:937px;top:426px;width:36px;height:18px;line-height:18px;"><span class="c">让球</span></div>
<div class="th sub" style="left:974px;top:426px;width:55px;height:18px;line-height:18px;"><span class="c">进球数</span></div>
<div class="sel" style="left:556px;top:406px;width:61px;height:19px;"><span class="sl" style="line-height:17px;padding-left:4px">Crow*</span><svg class="chev" width="11" height="8" viewBox="0 0 11 8" style="top:5.0px"><path d="M1.3 1.5 L5.5 5.7 L9.7 1.5" fill="none" stroke="#000" stroke-width="2.1"/></svg></div>
<div class="sel" style="left:624px;top:406px;width:51px;height:19px;"><span class="sl" style="line-height:17px;padding-left:4px"><span class="c">终指</span></span><svg class="chev" width="11" height="8" viewBox="0 0 11 8" style="top:5.0px"><path d="M1.3 1.5 L5.5 5.7 L9.7 1.5" fill="none" stroke="#000" stroke-width="2.1"/></svg></div>
<div class="sel" style="left:738px;top:406px;width:70px;height:19px;"><span class="sl" style="line-height:17px;padding-left:4px"><span class="c">平均值</span></span><svg class="chev" width="11" height="8" viewBox="0 0 11 8" style="top:5.0px"><path d="M1.3 1.5 L5.5 5.7 L9.7 1.5" fill="none" stroke="#000" stroke-width="2.1"/></svg></div>
<div class="sel" style="left:815px;top:406px;width:51px;height:19px;"><span class="sl" style="line-height:17px;padding-left:4px"><span class="c">终指</span></span><svg class="chev" width="11" height="8" viewBox="0 0 11 8" style="top:5.0px"><path d="M1.3 1.5 L5.5 5.7 L9.7 1.5" fill="none" stroke="#000" stroke-width="2.1"/></svg></div>
<div class="sel" style="left:939px;top:406px;width:50px;height:19px;"><span class="sl" style="line-height:17px;padding-left:4px"><span class="c">全场</span></span><svg class="chev" width="11" height="8" viewBox="0 0 11 8" style="top:5.0px"><path d="M1.3 1.5 L5.5 5.7 L9.7 1.5" fill="none" stroke="#000" stroke-width="2.1"/></svg></div>
<div class="tl" style="left:3px;top:445px;width:80px;height:25px;line-height:25px;"><span class="c">波兰超</span></div>
<div class="td" style="left:84px;top:446px;width:73px;height:25px;line-height:25px;">25-04-06</div>
<div class="td" style="left:158px;top:446px;width:122px;height:25px;line-height:25px;"><span style="color:#167a16"><span class="c">乔治罗尼亚</span></span></div>
<div class="td" style="left:281px;top:446px;width:86px;height:25px;line-height:25px;"><span style="color:#d21c1c">1-1</span>(1-0)</div>
<div class="td" style="left:368px;top:446px;width:37px;height:25px;line-height:25px;">5-4</div>
<div class="td" style="left:406px;top:446px;width:120px;height:25px;line-height:25px;"><span class="c">皮亚斯特</span></div>
<div class="td" style="left:527px;top:446px;width:46px;height:25px;line-height:25px;">0.80</div>
<div class="td" style="left:574px;top:446px;width:81px;height:25px;line-height:25px;"><span class="c">平</span>/<span class="c">半</span></div>
<div class="td" style="left:656px;top:446px;width:49px;height:25px;line-height:25px;">1.08</div>
<div class="td" style="left:706px;top:446px;width:63px;height:25px;line-height:25px;">2.07</div>
<div class="td" style="left:770px;top:446px;width:63px;height:25px;line-height:25px;">3.15</div>
<div class="td" style="left:834px;top:446px;width:65px;height:25px;line-height:25px;">3.54</div>
<div class="td" style="left:900px;top:446px;width:36px;height:25px;line-height:25px;"><span style="color:#167a16"><span class="c">平</span></span></div>
<div class="td" style="left:937px;top:446px;width:36px;height:25px;line-height:25px;"><span style="color:#1414a0"><span class="c">输</span></span></div>
<div class="td" style="left:974px;top:446px;width:55px;height:25px;line-height:25px;"><span style="color:#1414a0"><span class="c">小</span></span></div>
<div class="tl" style="left:3px;top:471px;width:80px;height:25px;line-height:25px;"><span class="c">波超杯</span></div>
<div class="td" style="left:84px;top:472px;width:73px;height:25px;line-height:25px;">25-04-03</div>
<div class="td" style="left:158px;top:472px;width:122px;height:25px;line-height:25px;"><span style="color:#167a16"><span class="c">乔治罗尼亚</span>(<span class="c">中</span>)</span></div>
<div class="td" style="left:281px;top:472px;width:86px;height:25px;line-height:25px;"><span style="color:#d21c1c">1-0</span>(1-0)</div>
<div class="td" style="left:368px;top:472px;width:37px;height:25px;line-height:25px;">1-10</div>
<div class="td" style="left:406px;top:472px;width:120px;height:25px;line-height:25px;"><span class="c">克拉科夫</span></div>
<div class="td" style="left:527px;top:472px;width:46px;height:25px;line-height:25px;">0.81</div>
<div class="td" style="left:574px;top:472px;width:81px;height:25px;line-height:25px;"><span class="c">半球</span></div>
<div class="td" style="left:656px;top:472px;width:49px;height:25px;line-height:25px;">1.01</div>
<div class="td" style="left:706px;top:472px;width:63px;height:25px;line-height:25px;">1.81</div>
<div class="td" style="left:770px;top:472px;width:63px;height:25px;line-height:25px;">3.59</div>
<div class="td" style="left:834px;top:472px;width:65px;height:25px;line-height:25px;">4.13</div>
<div class="td" style="left:900px;top:472px;width:36px;height:25px;line-height:25px;"><span style="color:#d21c1c"><span class="c">胜</span></span></div>
<div class="td" style="left:937px;top:472px;width:36px;height:25px;line-height:25px;"><span style="color:#d21c1c"><span class="c">赢</span></span></div>
<div class="td" style="left:974px;top:472px;width:55px;height:25px;line-height:25px;"><span style="color:#1414a0"><span class="c">小</span></span></div>
<div class="tl" style="left:3px;top:497px;width:80px;height:25px;line-height:25px;"><span class="c">波兰超</span></div>
<div class="td" style="left:84px;top:498px;width:73px;height:25px;line-height:25px;">25-03-30</div>
<div class="td" style="left:158px;top:498px;width:122px;height:25px;line-height:25px;"><span class="c">列治亚</span></div>
<div class="td" style="left:281px;top:498px;width:86px;height:25px;line-height:25px;"><span style="color:#d21c1c">1-0</span>(0-0)</div>
<div class="td" style="left:368px;top:498px;width:37px;height:25px;line-height:25px;">3-11</div>
<div class="td" style="left:406px;top:498px;width:120px;height:25px;line-height:25px;"><span style="color:#167a16"><span class="c">乔治罗尼亚</span></span></div>
<div class="td" style="left:527px;top:498px;width:46px;height:25px;line-height:25px;">0.88</div>
<div class="td" style="left:574px;top:498px;width:81px;height:25px;line-height:25px;"><span class="c">受平</span>/<span class="c">半</span></div>
<div class="td" style="left:656px;top:498px;width:49px;height:25px;line-height:25px;">1.00</div>
<div class="td" style="left:706px;top:498px;width:63px;height:25px;line-height:25px;">2.95</div>
<div class="td" style="left:770px;top:498px;width:63px;height:25px;line-height:25px;">3.45</div>
<div class="td" style="left:834px;top:498px;width:65px;height:25px;line-height:25px;">2.21</div>
<div class="td" style="left:900px;top:498px;width:36px;height:25px;line-height:25px;"><span style="color:#1414a0"><span class="c">负</span></span></div>
<div class="td" style="left:937px;top:498px;width:36px;height:25px;line-height:25px;"><span style="color:#1414a0"><span class="c">输</span></span></div>
<div class="td" style="left:974px;top:498px;width:55px;height:25px;line-height:25px;"><span style="color:#1414a0"><span class="c">小</span></span></div>
<div class="tl" style="left:3px;top:523px;width:80px;height:25px;line-height:25px;"><span class="c">波兰超</span></div>
<div class="td" style="left:84px;top:524px;width:73px;height:25px;line-height:25px;">25-03-17</div>
<div class="td" style="left:158px;top:524px;width:122px;height:25px;line-height:25px;"><span style="color:#167a16"><span class="c">乔治罗尼亚</span></span></div>
<div class="td" style="left:281px;top:524px;width:86px;height:25px;line-height:25px;"><span style="color:#d21c1c">2-1</span>(1-1)</div>
<div class="td" style="left:368px;top:524px;width:37px;height:25px;line-height:25px;">0-4</div>
<div class="td" style="left:406px;top:524px;width:120px;height:25px;line-height:25px;"><span class="c">莱克普斯纳</span></div>
<div class="td" style="left:527px;top:524px;width:46px;height:25px;line-height:25px;">0.95</div>
<div class="td" style="left:574px;top:524px;width:81px;height:25px;line-height:25px;"><span class="c">平手</span></div>
<div class="td" style="left:656px;top:524px;width:49px;height:25px;line-height:25px;">0.93</div>
<div class="td" style="left:706px;top:524px;width:63px;height:25px;line-height:25px;">2.62</div>
<div class="td" style="left:770px;top:524px;width:63px;height:25px;line-height:25px;">3.38</div>
<div class="td" style="left:834px;top:524px;width:65px;height:25px;line-height:25px;">2.48</div>
<div class="td" style="left:900px;top:524px;width:36px;height:25px;line-height:25px;"><span style="color:#d21c1c"><span class="c">胜</span></span></div>
<div class="td" style="left:937px;top:524px;width:36px;height:25px;line-height:25px;"><span style="color:#d21c1c"><span class="c">赢</span></span></div>
<div class="td" style="left:974px;top:524px;width:55px;height:25px;line-height:25px;"><span style="color:#d21c1c"><span class="c">大</span></span></div>
<div class="tl" style="left:3px;top:549px;width:80px;height:25px;line-height:25px;"><span class="c">欧会杯</span></div>
<div class="td" style="left:84px;top:550px;width:73px;height:25px;line-height:25px;">25-03-14</div>
<div class="td" style="left:158px;top:550px;width:122px;height:25px;line-height:25px;"><span class="c">色格拉布鲁日</span></div>
<div class="td" style="left:281px;top:550px;width:86px;height:25px;line-height:25px;"><span style="color:#d21c1c">2-0</span>(1-0)</div>
<div class="td" style="left:368px;top:550px;width:37px;height:25px;line-height:25px;">17-2</div>
<div class="td" style="left:406px;top:550px;width:120px;height:25px;line-height:25px;"><span style="color:#167a16"><span class="c">乔治罗尼亚</span></span></div>
<div class="td" style="left:527px;top:550px;width:46px;height:25px;line-height:25px;">0.99</div>
<div class="td" style="left:574px;top:550px;width:81px;height:25px;line-height:25px;"><span class="c">半球</span></div>
<div class="td" style="left:656px;top:550px;width:49px;height:25px;line-height:25px;">0.90</div>
<div class="td" style="left:706px;top:550px;width:63px;height:25px;line-height:25px;">1.98</div>
<div class="td" style="left:770px;top:550px;width:63px;height:25px;line-height:25px;">3.64</div>
<div class="td" style="left:834px;top:550px;width:65px;height:25px;line-height:25px;">3.57</div>
<div class="td" style="left:900px;top:550px;width:36px;height:25px;line-height:25px;"><span style="color:#1414a0"><span class="c">负</span></span></div>
<div class="td" style="left:937px;top:550px;width:36px;height:25px;line-height:25px;"><span style="color:#1414a0"><span class="c">输</span></span></div>
<div class="td" style="left:974px;top:550px;width:55px;height:25px;line-height:25px;"><span style="color:#1414a0"><span class="c">小</span></span></div>
<div class="tl" style="left:3px;top:575px;width:80px;height:25px;line-height:25px;"><span class="c">波兰超</span></div>
<div class="td" style="left:84px;top:576px;width:73px;height:25px;line-height:25px;">25-03-10</div>
<div class="td" style="left:158px;top:576px;width:122px;height:25px;line-height:25px;"><span class="c">维德祖罗兹</span></div>
<div class="td" style="left:281px;top:576px;width:86px;height:25px;line-height:25px;"><span style="color:#d21c1c">0-1</span>(0-1)</div>
<div class="td" style="left:368px;top:576px;width:37px;height:25px;line-height:25px;">13-2</div>
<div class="td" style="left:406px;top:576px;width:120px;height:25px;line-height:25px;"><span style="color:#167a16"><span class="c">乔治罗尼亚</span></span></div>
<div class="td" style="left:527px;top:576px;width:46px;height:25px;line-height:25px;">0.88</div>
<div class="td" style="left:574px;top:576px;width:81px;height:25px;line-height:25px;"><span class="c">受平</span>/<span class="c">半</span></div>
<div class="td" style="left:656px;top:576px;width:49px;height:25px;line-height:25px;">1.00</div>
<div class="td" style="left:706px;top:576px;width:63px;height:25px;line-height:25px;">3.05</div>
<div class="td" style="left:770px;top:576px;width:63px;height:25px;line-height:25px;">3.39</div>
<div class="td" style="left:834px;top:576px;width:65px;height:25px;line-height:25px;">2.17</div>
<div class="td" style="left:900px;top:576px;width:36px;height:25px;line-height:25px;"><span style="color:#d21c1c"><span class="c">胜</span></span></div>
<div class="td" style="left:937px;top:576px;width:36px;height:25px;line-height:25px;"><span style="color:#d21c1c"><span class="c">赢</span></span></div>
<div class="td" style="left:974px;top:576px;width:55px;height:25px;line-height:25px;"><span style="color:#1414a0"><span class="c">小</span></span></div>
<div class="tl" style="left:3px;top:601px;width:80px;height:25px;line-height:25px;"><span class="c">欧会杯</span></div>
<div class="td" style="left:84px;top:602px;width:73px;height:25px;line-height:25px;">25-03-07</div>
<div class="td" style="left:158px;top:602px;width:122px;height:25px;line-height:25px;"><span style="color:#167a16"><span class="c">乔治罗尼亚</span></span></div>
<div class="td" style="left:281px;top:602px;width:86px;height:25px;line-height:25px;"><span style="color:#d21c1c">3-0</span>(0-0)</div>
<div class="td" style="left:368px;top:602px;width:37px;height:25px;line-height:25px;">3-2</div>
<div class="td" style="left:406px;top:602px;width:120px;height:25px;line-height:25px;"><span class="c">色格拉布鲁日</span><span class="rc">1</span></div>
<div class="td" style="left:527px;top:602px;width:46px;height:25px;line-height:25px;">0.87</div>
<div class="td" style="left:574px;top:602px;width:81px;height:25px;line-height:25px;"><span class="c">平</span>/<span class="c">半</span></div>
<div class="td" style="left:656px;top:602px;width:49px;height:25px;line-height:25px;">1.02</div>
<div class="td" style="left:706px;top:602px;width:63px;height:25px;line-height:25px;">2.04</div>
<div class="td" style="left:770px;top:602px;width:63px;height:25px;line-height:25px;">3.32</div>
<div class="td" style="left:834px;top:602px;width:65px;height:25px;line-height:25px;">3.72</div>
<div class="td" style="left:900px;top:602px;width:36px;height:25px;line-height:25px;"><span style="color:#d21c1c"><span class="c">胜</span></span></div>
<div class="td" style="left:937px;top:602px;width:36px;height:25px;line-height:25px;"><span style="color:#d21c1c"><span class="c">赢</span></span></div>
<div class="td" style="left:974px;top:602px;width:55px;height:25px;line-height:25px;"><span style="color:#d21c1c"><span class="c">大</span></span></div>
<div class="tl" style="left:3px;top:627px;width:80px;height:25px;line-height:25px;"><span class="c">波兰超</span></div>
<div class="td" style="left:84px;top:628px;width:73px;height:25px;line-height:25px;">25-03-03</div>
<div class="td" style="left:158px;top:628px;width:122px;height:25px;line-height:25px;"><span style="color:#167a16"><span class="c">乔治罗尼亚</span></span></div>
<div class="td" style="left:281px;top:628px;width:86px;height:25px;line-height:25px;"><span style="color:#d21c1c">1-0</span>(1-0)</div>
<div class="td" style="left:368px;top:628px;width:37px;height:25px;line-height:25px;">4-0</div>
<div class="td" style="left:406px;top:628px;width:120px;height:25px;line-height:25px;">GKS<span class="c">卡托威斯</span></div>
<div class="td" style="left:527px;top:628px;width:46px;height:25px;line-height:25px;">0.88</div>
<div class="td" style="left:574px;top:628px;width:81px;height:25px;line-height:25px;"><span class="c">半球</span></div>
<div class="td" style="left:656px;top:628px;width:49px;height:25px;line-height:25px;">1.00</div>
<div class="td" style="left:706px;top:628px;width:63px;height:25px;line-height:25px;">1.78</div>
<div class="td" style="left:770px;top:628px;width:63px;height:25px;line-height:25px;">3.83</div>
<div class="td" style="left:834px;top:628px;width:65px;height:25px;line-height:25px;">3.84</div>
<div class="td" style="left:900px;top:628px;width:36px;height:25px;line-height:25px;"><span style="color:#d21c1c"><span class="c">胜</span></span></div>
<div class="td" style="left:937px;top:628px;width:36px;height:25px;line-height:25px;"><span style="color:#d21c1c"><span class="c">赢</span></span></div>
<div class="td" style="left:974px;top:628px;width:55px;height:25px;line-height:25px;"><span style="color:#1414a0"><span class="c">小</span></span></div>
<div class="tl" style="left:3px;top:653px;width:80px;height:25px;line-height:25px;"><span class="c">波兰杯</span></div>
<div class="td" style="left:84px;top:654px;width:73px;height:25px;line-height:25px;">25-02-27</div>
<div class="td" style="left:158px;top:654px;width:122px;height:25px;line-height:25px;"><span class="c">华沙莱吉亚</span></div>
<div class="td" style="left:281px;top:654px;width:86px;height:25px;line-height:25px;"><span style="color:#d21c1c">3-1</span>(0-1)</div>
<div class="td" style="left:368px;top:654px;width:37px;height:25px;line-height:25px;">3-5</div>
<div class="td" style="left:406px;top:654px;width:120px;height:25px;line-height:25px;"><span style="color:#167a16"><span class="c">乔治罗尼亚</span></span></div>
<div class="td" style="left:527px;top:654px;width:46px;height:25px;line-height:25px;">0.88</div>
<div class="td" style="left:574px;top:654px;width:81px;height:25px;line-height:25px;"><span class="c">半球</span></div>
<div class="td" style="left:656px;top:654px;width:49px;height:25px;line-height:25px;">1.00</div>
<div class="td" style="left:706px;top:654px;width:63px;height:25px;line-height:25px;">1.91</div>
<div class="td" style="left:770px;top:654px;width:63px;height:25px;line-height:25px;">3.57</div>
<div class="td" style="left:834px;top:654px;width:65px;height:25px;line-height:25px;">3.52</div>
<div class="td" style="left:900px;top:654px;width:36px;height:25px;line-height:25px;"><span style="color:#1414a0"><span class="c">负</span></span></div>
<div class="td" style="left:937px;top:654px;width:36px;height:25px;line-height:25px;"><span style="color:#1414a0"><span class="c">输</span></span></div>
<div class="td" style="left:974px;top:654px;width:55px;height:25px;line-height:25px;"><span style="color:#d21c1c"><span class="c">大</span></span></div>
<div class="tl" style="left:3px;top:679px;width:80px;height:25px;line-height:25px;"><span class="c">波兰超</span></div>
<div class="td" style="left:84px;top:680px;width:73px;height:25px;line-height:25px;">25-02-23</div>
<div class="td" style="left:158px;top:680px;width:122px;height:25px;line-height:25px;"><span class="c">克拉科维亚</span></div>
<div class="td" style="left:281px;top:680px;width:86px;height:25px;line-height:25px;"><span style="color:#d21c1c">2-2</span>(0-2)</div>
<div class="td" style="left:368px;top:680px;width:37px;height:25px;line-height:25px;">4-11</div>
<div class="td" style="left:406px;top:680px;width:120px;height:25px;line-height:25px;"><span style="color:#167a16"><span class="c">乔治罗尼亚</span></span></div>
<div class="td" style="left:527px;top:680px;width:46px;height:25px;line-height:25px;">0.96</div>
<div class="td" style="left:574px;top:680px;width:81px;height:25px;line-height:25px;"><span class="c">平</span>/<span class="c">半</span></div>
<div class="td" style="left:656px;top:680px;width:49px;height:25px;line-height:25px;">0.92</div>
<div class="td" style="left:706px;top:680px;width:63px;height:25px;line-height:25px;">2.12</div>
<div class="td" style="left:770px;top:680px;width:63px;height:25px;line-height:25px;">3.46</div>
<div class="td" style="left:834px;top:680px;width:65px;height:25px;line-height:25px;">3.08</div>
<div class="td" style="left:900px;top:680px;width:36px;height:25px;line-height:25px;"><span style="color:#167a16"><span class="c">平</span></span></div>
<div class="td" style="left:937px;top:680px;width:36px;height:25px;line-height:25px;"><span style="color:#d21c1c"><span class="c">赢</span></span></div>
<div class="td" style="left:974px;top:680px;width:55px;height:25px;line-height:25px;"><span style="color:#d21c1c"><span class="c">大</span></span></div>
<div class="td" style="left:3px;top:706px;width:1026px;height:25px;line-height:25px;letter-spacing:0.2px"><span class="c">近</span><span style="color:#d21c1c">10</span><span class="c">场</span>,<span class="c">胜</span>5<span class="c">平</span>2<span class="c">负</span>3, <span class="c">胜率</span>:<span style="color:#d21c1c">50%</span> <span class="c">让胜率</span>:<span style="color:#d21c1c">60%</span> <span class="c">大率</span>:<span style="color:#d21c1c">40%</span> <span class="c">单率</span>:<span style="color:#d21c1c">60%</span></div>
<div style="left:2px;top:29px;width:1028px;height:1px;background:#e3e1f8;"></div>
</body></html>
